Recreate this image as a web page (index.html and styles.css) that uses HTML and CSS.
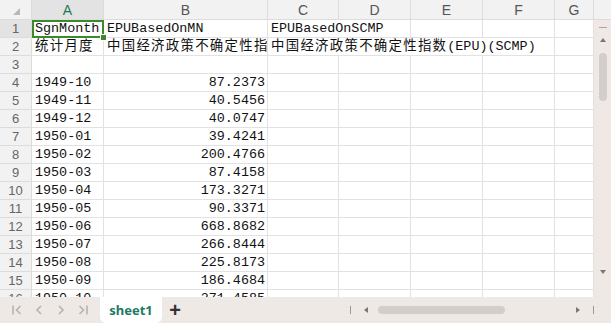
FILE: index.html
```html
<!DOCTYPE html>
<html lang="zh-CN">
<head>
    <meta charset="UTF-8">
    <title>sheet1</title>
    <link rel="stylesheet" href="styles.css">
</head>
<body>
    <div class="book">
        <!-- 表格区域 -->
        <div class="main">
            <div class="grid">
                <div class="hd corner"><span class="tri"></span></div>
                <div class="hd col active">A</div>
                <div class="hd col">B</div>
                <div class="hd col">C</div>
                <div class="hd col">D</div>
                <div class="hd col">E</div>
                <div class="hd col">F</div>
                <div class="hd col">G</div>

                <div class="hd row active">1</div>
                <div class="c sel">SgnMonth<span class="handle"></span></div>
                <div class="c">EPUBasedOnMN</div>
                <div class="c span2">EPUBasedOnSCMP</div>
                <div class="c"></div>
                <div class="c"></div>
                <div class="c"></div>

                <div class="hd row">2</div>
                <div class="c"><span class="cjk">统计月度</span></div>
                <div class="c"><span class="cjk">中国经济政策不确定性指数</span></div>
                <div class="c span4"><span class="cjk">中国经济政策不确定性指数</span>(EPU)(SCMP)</div>
                <div class="c"></div>

                <div class="hd row">3</div>
                <div class="c"></div><div class="c"></div><div class="c"></div><div class="c"></div><div class="c"></div><div class="c"></div><div class="c"></div>

                <div class="hd row">4</div>
                <div class="c">1949-10</div><div class="c num">87.2373</div><div class="c"></div><div class="c"></div><div class="c"></div><div class="c"></div><div class="c"></div>
                <div class="hd row">5</div>
                <div class="c">1949-11</div><div class="c num">40.5456</div><div class="c"></div><div class="c"></div><div class="c"></div><div class="c"></div><div class="c"></div>
                <div class="hd row">6</div>
                <div class="c">1949-12</div><div class="c num">40.0747</div><div class="c"></div><div class="c"></div><div class="c"></div><div class="c"></div><div class="c"></div>
                <div class="hd row">7</div>
                <div class="c">1950-01</div><div class="c num">39.4241</div><div class="c"></div><div class="c"></div><div class="c"></div><div class="c"></div><div class="c"></div>
                <div class="hd row">8</div>
                <div class="c">1950-02</div><div class="c num">200.4766</div><div class="c"></div><div class="c"></div><div class="c"></div><div class="c"></div><div class="c"></div>
                <div class="hd row">9</div>
                <div class="c">1950-03</div><div class="c num">87.4158</div><div class="c"></div><div class="c"></div><div class="c"></div><div class="c"></div><div class="c"></div>
                <div class="hd row">10</div>
                <div class="c">1950-04</div><div class="c num">173.3271</div><div class="c"></div><div class="c"></div><div class="c"></div><div class="c"></div><div class="c"></div>
                <div class="hd row">11</div>
                <div class="c">1950-05</div><div class="c num">90.3371</div><div class="c"></div><div class="c"></div><div class="c"></div><div class="c"></div><div class="c"></div>
                <div class="hd row">12</div>
                <div class="c">1950-06</div><div class="c num">668.8682</div><div class="c"></div><div class="c"></div><div class="c"></div><div class="c"></div><div class="c"></div>
                <div class="hd row">13</div>
                <div class="c">1950-07</div><div class="c num">266.8444</div><div class="c"></div><div class="c"></div><div class="c"></div><div class="c"></div><div class="c"></div>
                <div class="hd row">14</div>
                <div class="c">1950-08</div><div class="c num">225.8173</div><div class="c"></div><div class="c"></div><div class="c"></div><div class="c"></div><div class="c"></div>
                <div class="hd row">15</div>
                <div class="c">1950-09</div><div class="c num">186.4684</div><div class="c"></div><div class="c"></div><div class="c"></div><div class="c"></div><div class="c"></div>
                <div class="hd row">16</div>
                <div class="c">1950-10</div><div class="c num">271.4585</div><div class="c"></div><div class="c"></div><div class="c"></div><div class="c"></div><div class="c"></div>
            </div>
            <!-- 竖向滚动条 -->
            <div class="vscroll">
                <div class="vs-top"></div>
                <div class="vs-body">
                    <span class="vs-dash"></span>
                    <span class="arr up"></span>
                    <span class="vs-thumb"></span>
                    <span class="vs-fill"></span>
                    <span class="arr down"></span>
                </div>
            </div>
        </div>
        <!-- 底部工作表标签 -->
        <div class="footer">
            <div class="nav">
                <svg width="12" height="12" viewBox="0 0 12 12"><path d="M2 1.5v9M9.5 2 5.5 6l4 4" fill="none" stroke="#b3b3b3" stroke-width="1.6"/></svg>
                <svg width="12" height="12" viewBox="0 0 12 12"><path d="M8 2 4 6l4 4" fill="none" stroke="#b3b3b3" stroke-width="1.6"/></svg>
                <svg width="12" height="12" viewBox="0 0 12 12"><path d="M4 2l4 4-4 4" fill="none" stroke="#b3b3b3" stroke-width="1.6"/></svg>
                <svg width="12" height="12" viewBox="0 0 12 12"><path d="M2.5 2l4 4-4 4M10 1.5v9" fill="none" stroke="#b3b3b3" stroke-width="1.6"/></svg>
            </div>
            <div class="tab">sheet1</div>
            <div class="add">+</div>
            <div class="hscroll">
                <div class="bar"></div>
                <div class="harr left"></div>
                <div class="hs-thumb"></div>
                <div class="hs-fill"></div>
                <div class="harr right"></div>
                <div class="bar"></div>
            </div>
        </div>
    </div>
</body>
</html>
```

FILE: styles.css
```css
/* 页面基本样式 */
body {
    margin: 0;
    background: #ffffff;
    font-family: "Liberation Sans", "Noto Sans CJK SC", sans-serif;
}

.book {
    width: 611px;
    height: 323px;
    overflow: hidden;
    display: flex;
    flex-direction: column;
}

/* 表格区域 */
.main {
    display: flex;
    height: 297px;
    flex: none;
    overflow: hidden;
}

.grid {
    display: grid;
    grid-template-columns: 32px 72px 164px 71px 72px 72px 72px 39px;
    grid-template-rows: 20px;
    grid-auto-rows: 18px;
    width: 594px;
    flex: none;
}

/* 行列标题 */
.hd {
    box-sizing: border-box;
    background: #f2f2f2;
    border-right: 1px solid #dcdcdc;
    border-bottom: 1px solid #dcdcdc;
    color: #555555;
    display: flex;
    align-items: center;
    justify-content: center;
}

.hd.col {
    font-size: 14px;
}

.hd.row {
    font-size: 13px;
    color: #666666;
}

.hd.active {
    background: #e3e3e3;
}

.hd.col.active {
    color: #1e7a55;
}

.corner {
    position: relative;
}

.tri {
    position: absolute;
    right: 11px;
    bottom: 4px;
    width: 0;
    height: 0;
    border-left: 7px solid transparent;
    border-bottom: 7px solid #b8b8b8;
}

/* 单元格 */
.c {
    box-sizing: border-box;
    border-right: 1px solid #e2e2e2;
    border-bottom: 1px solid #e2e2e2;
    font-family: "Liberation Mono", "Noto Sans CJK SC", monospace;
    font-size: 13.4px;
    line-height: 18px;
    color: #111111;
    padding: 0 2px 0 3px;
    white-space: nowrap;
    overflow: hidden;
}

.c.num {
    text-align: right;
}

.c.span2 {
    grid-column: span 2;
}

.c.span4 {
    grid-column: span 4;
}

.cjk {
    letter-spacing: 1.3px;
}

/* 选中单元格 */
.c.sel {
    position: relative;
    overflow: visible;
}

.c.sel::after {
    content: "";
    position: absolute;
    left: 0;
    top: 0;
    right: -1px;
    bottom: -1px;
    border: 2px solid #3a8a2c;
}

.handle {
    position: absolute;
    right: -4px;
    bottom: -4px;
    width: 5px;
    height: 5px;
    background: #3a8a2c;
    border: 1px solid #ffffff;
    z-index: 1;
}

/* 竖向滚动条 */
.vscroll {
    width: 17px;
    flex: none;
    display: flex;
    flex-direction: column;
}

.vs-top {
    height: 20px;
    flex: none;
    background: #f2f2f2;
    border-bottom: 1px solid #dcdcdc;
    box-sizing: border-box;
}

.vs-body {
    flex: 1;
    background: #efe8e5;
    display: flex;
    flex-direction: column;
    align-items: center;
    padding-top: 7px;
}

.vs-dash {
    width: 8px;
    height: 1px;
    background: #a9a5a3;
}

.arr {
    width: 0;
    height: 0;
    border-left: 3px solid transparent;
    border-right: 3px solid transparent;
}

.arr.up {
    margin-top: 10px;
    border-bottom: 4px solid #777777;
}

.arr.down {
    margin-bottom: 23px;
    border-top: 4px solid #777777;
}

.vs-thumb {
    margin-top: 11px;
    width: 8px;
    height: 48px;
    border-radius: 4px;
    background: #d3cdcb;
}

.vs-fill {
    flex: 1;
}

/* 底部 */
.footer {
    height: 26px;
    flex: none;
    background: #efe9e6;
    display: flex;
    align-items: center;
}

.nav {
    display: flex;
    gap: 10px;
    padding-left: 11px;
    width: 100px;
    flex: none;
    box-sizing: border-box;
}

.tab {
    align-self: stretch;
    width: 62px;
    flex: none;
    background: #ffffff;
    border-radius: 0 0 6px 6px;
    color: #1d7a64;
    font-family: "Noto Sans", "Liberation Sans", sans-serif;
    font-weight: bold;
    font-size: 13px;
    display: flex;
    align-items: center;
    justify-content: center;
}

.add {
    margin-left: 6px;
    width: 14px;
    flex: none;
    font-size: 20px;
    font-weight: bold;
    color: #333333;
    line-height: 20px;
    text-align: center;
}

.hscroll {
    margin-left: 168px;
    width: 244px;
    height: 10px;
    flex: none;
    display: flex;
    align-items: center;
}

.bar {
    width: 1px;
    height: 8px;
    background: #999999;
}

.harr {
    width: 0;
    height: 0;
    border-top: 3px solid transparent;
    border-bottom: 3px solid transparent;
}

.harr.left {
    margin-left: 13px;
    border-right: 4px solid #777777;
}

.harr.right {
    margin-right: 13px;
    border-left: 4px solid #777777;
}

.hs-thumb {
    margin-left: 10px;
    width: 127px;
    height: 8px;
    border-radius: 4px;
    background: #d3cdcb;
}

.hs-fill {
    flex: 1;
}
```
